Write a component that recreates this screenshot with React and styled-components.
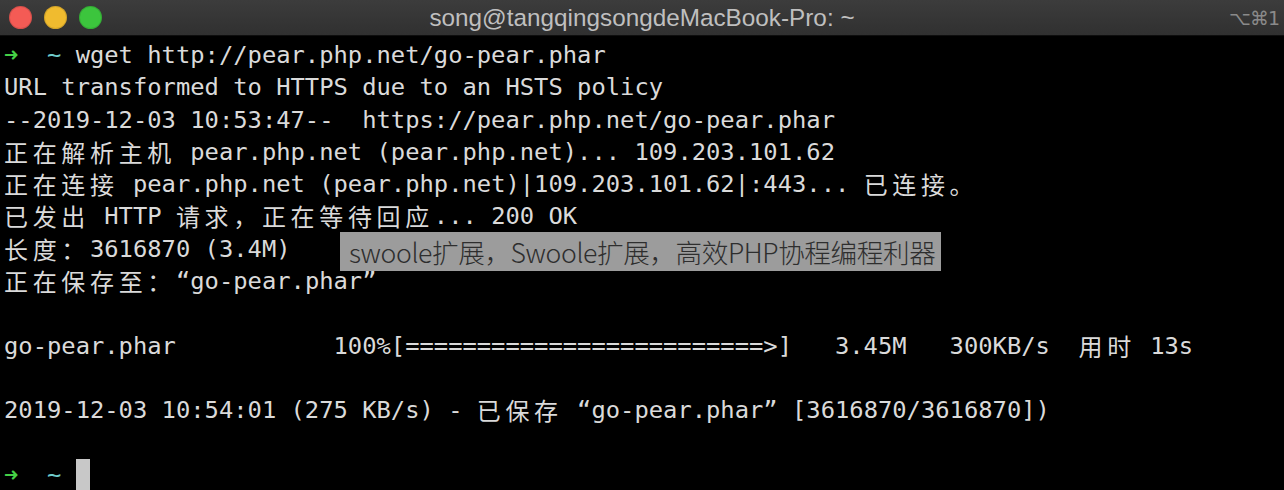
import React from "react";
import styled, { createGlobalStyle } from "styled-components";

const Global = createGlobalStyle`
  html, body { margin: 0; padding: 0; background: #000; }
  body { width: 1284px; height: 490px; overflow: hidden; }
`;

const CELL = 14.33;

const Window = styled.div`
  position: relative;
  width: 1284px;
  height: 490px;
  background: #000;
  overflow: hidden;
  display: flex;
  flex-direction: column;
`;

const TitleBar = styled.div`
  height: 35px;
  flex: 0 0 35px;
  border-bottom: 1px solid #0e0e0e;
  background: linear-gradient(#3c3c3c, #303030);
  display: grid;
  grid-template-columns: 200px 1fr 200px;
  align-items: center;
`;

const Lights = styled.div`
  display: flex;
  gap: 12px;
  padding-left: 9px;
  align-items: center;
`;

const Light = styled.span`
  width: 23px;
  height: 23px;
  border-radius: 50%;
  background: ${(p) => p.$c};
  box-shadow: inset 0 0 0 1px rgba(0, 0, 0, 0.12);
`;

const Title = styled.div`
  text-align: center;
  font-family: "Liberation Sans", "Noto Sans", sans-serif;
  font-size: 24.3px;
  color: #bfbfbf;
  white-space: nowrap;
  padding-top: 1px;
`;

const Shortcut = styled.div`
  text-align: right;
  padding-right: 5px;
  font-family: "DejaVu Sans", sans-serif;
  font-size: 19px;
  color: #8a8a8a;
  letter-spacing: -1px;
`;

const Screen = styled.div`
  flex: 1;
  padding: 3px 0 0 4px;
  font-family: "DejaVu Sans Mono", "Liberation Mono", "Noto Sans CJK SC", monospace;
  font-size: 23.8px;
  color: #dadada;
`;

const Line = styled.div`
  height: 32.3px;
  line-height: 32.3px;
  white-space: pre;
`;

const Wide = styled.span`
  display: inline-block;
  width: ${CELL * 2}px;
  font-family: "Noto Sans CJK SC", sans-serif;
  font-size: 24px;
  text-align: left;
  vertical-align: top;
`;

const Arrow = styled.span`
  color: #45d046;
  font-weight: bold;
`;

const Tilde = styled.span`
  color: #6fcccc;
`;

const Cursor = styled.span`
  display: inline-block;
  width: ${CELL}px;
  height: 32.3px;
  vertical-align: top;
  background: #c8c8c8;
`;

const Caption = styled.div`
  position: absolute;
  left: 340px;
  top: 232px;
  height: 39px;
  padding: 0 6px 0 9px;
  background: #9c9c9c;
  color: #2e2e2e;
  font-family: "Noto Sans CJK SC", "Noto Sans", sans-serif;
  font-weight: 300;
  font-size: 26.6px;
  line-height: 39px;
  white-space: nowrap;
  letter-spacing: -0.4px;
`;

const wideRe = /[\u3000-\u303f\u4e00-\u9fff\uff00-\uffef]/;

function Term({ text }) {
  const parts = [];
  let buf = "";
  Array.from(text).forEach((ch, i) => {
    if (wideRe.test(ch)) {
      if (buf) parts.push(buf);
      buf = "";
      parts.push(<Wide key={i}>{ch}</Wide>);
    } else {
      buf += ch;
    }
  });
  if (buf) parts.push(buf);
  return <>{parts}</>;
}

const lines = [
  "URL transformed to HTTPS due to an HSTS policy",
  "--2019-12-03 10:53:47--  https://pear.php.net/go-pear.phar",
  "正在解析主机 pear.php.net (pear.php.net)... 109.203.101.62",
  "正在连接 pear.php.net (pear.php.net)|109.203.101.62|:443... 已连接。",
  "已发出 HTTP 请求，正在等待回应... 200 OK",
  "长度：3616870 (3.4M)",
  "正在保存至：“go-pear.phar”",
  "",
  "go-pear.phar           100%[=========================>]   3.45M   300KB/s  用时 13s",
  "",
  "2019-12-03 10:54:01 (275 KB/s) - 已保存 “go-pear.phar” [3616870/3616870])",
  "",
];

export default function App() {
  return (
    <>
      <Global />
      <Window>
        <TitleBar>
          <Lights>
            <Light $c="#f45b55" />
            <Light $c="#f0bb2f" />
            <Light $c="#3cc53d" />
          </Lights>
          <Title>song@tangqingsongdeMacBook-Pro: ~</Title>
          <Shortcut>⌥⌘1</Shortcut>
        </TitleBar>
        <Screen>
          <Line>
            <Arrow>➜</Arrow>  <Tilde>~</Tilde> wget http://pear.php.net/go-pear.phar
          </Line>
          {lines.map((l, i) => (
            <Line key={i}>
              <Term text={l} />
            </Line>
          ))}
          <Line>
            <Arrow>➜</Arrow>  <Tilde>~</Tilde> <Cursor />
          </Line>
        </Screen>
        <Caption>swoole扩展，Swoole扩展，高效PHP协程编程利器</Caption>
      </Window>
    </>
  );
}
